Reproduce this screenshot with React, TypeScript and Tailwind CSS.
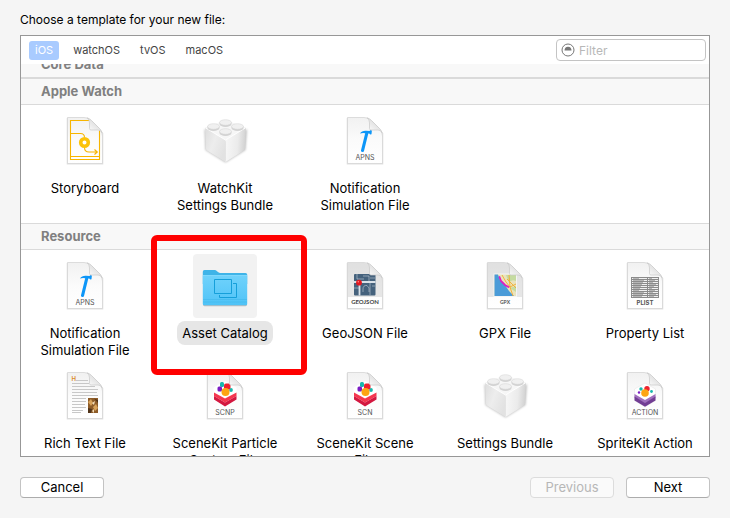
import type { ReactNode } from "react";

function Page({ children }: { children?: ReactNode }) {
  return (
    <svg viewBox="0 0 64 64" className="size-16" aria-hidden="true">
      <defs>
        <linearGradient id="paper" x1="0" y1="0" x2="0" y2="1">
          <stop offset="0" stopColor="#f1f1f1" />
          <stop offset="0.5" stopColor="#fbfbfb" />
          <stop offset="1" stopColor="#ffffff" />
        </linearGradient>
        <linearGradient id="curl" x1="0.1" y1="1" x2="0.7" y2="0.3">
          <stop offset="0" stopColor="#ffffff" />
          <stop offset="1" stopColor="#dcdcdc" />
        </linearGradient>
      </defs>
      <path d="M14.5 9v45.8h35V24" fill="none" stroke="#000" strokeOpacity="0.12" strokeWidth="1.6" />
      <path
        d="M14.5 8.5H31q4 0 7 3l8.500 8.500q3 3 3 7V54.500H14.500Z"
        fill="url(#paper)"
        stroke="#d4d4d4"
        strokeWidth="0.8"
      />
      {children}
      <path d="M34 8.800q2.500 1.500 2.500 5V19.500q0 1.500 1.500 1.500H45q3 0 4.200 3Q48.500 21.500 46.500 19.500L38.500 11.500Q36.500 9.500 34 8.800Z" fill="url(#curl)" stroke="#c8c8c8" strokeWidth="0.7" />
    </svg>
  );
}

function PageLabel({ children, size = 7, weight = 400, fill = "#555" }: { children: string; size?: number; weight?: number; fill?: string }) {
  return (
    <text x="32" y="51" textAnchor="middle" fontFamily="Inter, sans-serif" fontSize={size} fontWeight={weight} fill={fill}>
      {children}
    </text>
  );
}

function StoryboardIcon() {
  return (
    <Page>
      <g fill="none" stroke="#f7b500" strokeWidth="1.100">
        <path d="M36.500 11.500H17.500V50.500H46.500V21.500M17.500 47.500H46.500" />
        <path d="M17.500 24.500H27.500q4 0 4 4M31.500 38.500q0 4.500 4.500 4.500H44.500M41.500 40.500l2.800 2.500l-2.800 2.500" />
      </g>
      <circle cx="31.500" cy="33.500" r="3.800" fill="#fff" stroke="#fcc309" strokeWidth="3.600" />
    </Page>
  );
}

function ApnsIcon() {
  return (
    <Page>
      <path
        d="M27 24.500q1.800-3 6-2.800l3.500.3 1-.9 1.400.3-.4 3.900-1.300.2-.9-1.100-1 .1L31 42q-.4 1.200-1.500.9l-.8-.2q-1-.4-.7-1.500L32.200 24.200Q29.300 23.700 27 24.500Z"
        fill="#0d96f8"
      />
      <PageLabel>APNS</PageLabel>
    </Page>
  );
}

function Stud({ x, y }: { x: number; y: number }) {
  return (
    <g>
      <path d={`M${x - 6} ${y}v1.500a6 3 0 0 0 12 0V${y}Z`} fill="#d3d3d3" />
      <ellipse cx={x} cy={y} rx="6" ry="2.800" fill="#f0f0f0" stroke="#d0d0d0" strokeWidth="0.500" />
    </g>
  );
}

function BrickIcon() {
  return (
    <svg viewBox="0 0 64 64" className="size-16" aria-hidden="true">
      <defs>
        <linearGradient id="brickLeft" x1="0" y1="0" x2="1" y2="0.6">
          <stop offset="0" stopColor="#dddddd" />
          <stop offset="0.5" stopColor="#ededed" />
          <stop offset="1" stopColor="#e2e2e2" />
        </linearGradient>
        <linearGradient id="brickRight" x1="0" y1="0.3" x2="1" y2="0.4">
          <stop offset="0" stopColor="#f7f7f7" />
          <stop offset="0.6" stopColor="#ebebeb" />
          <stop offset="1" stopColor="#d0d0d0" />
        </linearGradient>
        <filter id="brickShade" x="-20%" y="-20%" width="140%" height="140%">
          <feGaussianBlur stdDeviation="1.200" />
        </filter>
      </defs>
      <path d="M11.500 20L32.500 32L54 20L52.500 41L32.500 53.500L12.500 41Z" fill="#000" fillOpacity="0.250" filter="url(#brickShade)" />
      <path d="M12 18.500L32.500 11L53 18.500L32.500 31Z" fill="#f6f6f6" />
      <path d="M12 18.500L32.500 31V53L14 41.500q-1-.6-1-1.800Z" fill="url(#brickLeft)" />
      <path d="M53 18.500L32.500 31V53L51 41.500q1-.6 1-1.800Z" fill="url(#brickRight)" />
      <path d="M12.200 18.700L32.500 31L52.800 18.700" fill="none" stroke="#fff" strokeWidth="0.900" />
      <Stud x={32.5} y={13.5} />
      <Stud x={20.5} y={17.5} />
      <Stud x={44.5} y={17.5} />
      <Stud x={32.5} y={22.5} />
    </svg>
  );
}

function FolderIcon() {
  return (
    <svg viewBox="0 0 64 64" className="size-16" aria-hidden="true">
      <defs>
        <linearGradient id="folder" x1="0" y1="0" x2="0" y2="1">
          <stop offset="0" stopColor="#70d2fb" />
          <stop offset="1" stopColor="#4fc3f7" />
        </linearGradient>
      </defs>
      <path d="M10 20H54V50.500q0 1.800-1.500 1.800H11.500Q10 52.300 10 50.500Z" fill="#000" fillOpacity="0.220" />
      <path d="M9.800 17.800Q9.800 16 11.500 16H21.500q1.500 0 2.500 1.200l1 .8q1 1 2.500 1H52.500q1.700 0 1.700 1.500V30H9.800Z" fill="#3fb4e8" />
      <path d="M9.800 21.500H54.200V50q0 1.300-1.300 1.300H11.100Q9.800 51.300 9.800 50Z" fill="url(#folder)" />
      <path d="M10 21.500H54" stroke="#8addff" strokeWidth="0.800" />
      <path d="M10 45.500H54M10 48H54" stroke="#35aee4" strokeWidth="0.600" strokeOpacity="0.600" />
      <g fill="none" stroke="#159fda" strokeWidth="1">
        <path d="M21.500 25.500H38.500V39.500H21.500ZM40 29.500H43.500V43.500H26.500V41" />
      </g>
    </svg>
  );
}

function GeoJsonIcon() {
  return (
    <Page>
      <path d="M14.900 9H31q4 0 7 3l8.500 8.500q2.500 3 2.500 6V43H14.900Z" fill="#cfcfcf" fillOpacity="0.500" />
      <rect x="21" y="20" width="21.500" height="21.500" rx="1" fill="#45627d" />
      <g fill="none" stroke="#d9e1e8">
        <path d="M21 28H42.500M26.500 28V41.500" strokeWidth="1.800" />
        <path d="M24 20V25H31M30 22H36V27M37 24H42M37 28V41M21 34H26M30 38V35Q30 31 34 31.500L36 34V38M39 32H42" strokeWidth="0.700" strokeOpacity="0.700" />
      </g>
      <circle cx="26" cy="28.700" r="2.900" fill="#e3171e" />
      <circle cx="25.300" cy="27.800" r="0.800" fill="#ff8a8a" />
      <text x="32" y="50" textAnchor="middle" fontFamily="Lato, sans-serif" fontSize="6" fontWeight="700" fill="#444">
        GEOJSON
      </text>
    </Page>
  );
}

function GpxIcon() {
  return (
    <Page>
      <path d="M14.900 9H31q4 0 7 3l8.500 8.500q2.500 3 2.500 6V43H14.900Z" fill="#cfcfcf" fillOpacity="0.500" />
      <rect x="20.500" y="19.500" width="23.500" height="23.500" fill="#f4f4f4" />
      <rect x="21.500" y="20.500" width="21.500" height="21.500" fill="#e9e3bd" />
      <path d="M21.500 20.500H25L27 26L32 31L36 37L41 42H21.500Z" fill="#4a9bd8" />
      <path d="M33 21H43V27Q38 25 36 29ZM37 34L43 32V38Z" fill="#c5dba0" />
      <path d="M29 21L33 28L37 33L40 42M34 25L43 34M36 21L37 33L43 30" fill="none" stroke="#f3ad2e" strokeWidth="0.900" />
      <path d="M26.500 23L28 27L32 31L35.500 33" fill="none" stroke="#dc1fc0" strokeWidth="1.800" strokeLinecap="round" />
      <text x="32" y="50" textAnchor="middle" fontFamily="Lato, sans-serif" fontSize="5" fontWeight="700" fill="#555">
        GPX
      </text>
    </Page>
  );
}

function PlistIcon() {
  return (
    <Page>
      <rect x="18" y="23" width="28" height="21" fill="#8b8b8b" />
      {[24, 26, 28, 30, 32, 34, 36, 38, 40, 42].map((y, i) => (
        <g key={y} fill="#efefef">
          <rect x="19" y={y} width="15" height="1" />
          <rect x="35" y={y} width="10" height="1" />
          <rect x="20" y={y} width={6 + ((i * 5) % 6)} height="1" fill="#b5b5b5" />
          <rect x="36" y={y} width={3 + ((i * 3) % 5)} height="1" fill="#b5b5b5" />
        </g>
      ))}
      <PageLabel size={6} weight={700}>PLIST</PageLabel>
    </Page>
  );
}

function RichTextIcon() {
  return (
    <Page>
      <text x="18.500" y="17" fontFamily="Inter, sans-serif" fontSize="6" fontWeight="600" fill="#d98a28">
        H
      </text>
      <g stroke="#c2c2c2" strokeWidth="0.900">
        <path d="M23 16.500H35M19 19.500H36M19 22.500H42M19 25.500H45M19 28.500H44M19 31.500H45M19 34.500H33M19 37.500H33M19 40.500H32M19 43.500H33M19 46.500H30M19 48.500H28" />
      </g>
      <rect x="35" y="34" width="10" height="15" fill="#8e5c28" />
      <path d="M35 38L38 35L40 39L38 42ZM40 43L43 40L45 44L42 47Z" fill="#d8a25a" />
      <path d="M41 34.500L45 36V39ZM35 44L39 45L38 49H35Z" fill="#503318" />
      <path d="M39 39L42 37L41 41ZM39 47L41 45V49Z" fill="#f2ddb9" />
    </Page>
  );
}

function SceneIcon({ label }: { label: string }) {
  return (
    <Page>
      <path d="M32 17L43.500 23.500V36L32 42.500L20.500 36V23.500Z" fill="#fff" />
      <path d="M21 28.500L32 34.500L43.500 28.500V32L32 38.500L21 32Z" fill="#f5364f" />
      <path d="M21 32L32 38.500L43.500 32V35.500L32 42.500L21 35.500Z" fill="#d3173f" />
      <rect x="27" y="18" width="4" height="5" rx="1.500" fill="#18b8ad" />
      <rect x="24.500" y="22.500" width="4.500" height="5" rx="1.500" fill="#7b1cc4" />
      <circle cx="38" cy="26" r="1.900" fill="#18b8ad" />
      <rect x="31" y="19.500" width="6.500" height="6" rx="2" fill="#ee2330" />
      <circle cx="32.500" cy="28" r="4" fill="#fda513" />
      <PageLabel>{label}</PageLabel>
    </Page>
  );
}

function SpriteIcon() {
  return (
    <Page>
      <path d="M32 19L42.500 25V36.500L32 43L21.500 36.500V25Z" fill="#fff" stroke="#e3e3e3" strokeWidth="0.500" />
      <path d="M21.500 30L32 36L42.500 30V33.500L32 39.500L21.500 33.500Z" fill="#a070be" />
      <path d="M21.500 32.500L32 39L42.500 32.500V36.500L32 42.800L21.500 36.500Z" fill="#713d93" />
      <circle cx="28" cy="25" r="1.700" fill="#18b8ad" />
      <circle cx="26" cy="28.500" r="1.200" fill="#7b1cc4" />
      <circle cx="38.500" cy="27.500" r="1.400" fill="#18b8ad" />
      <circle cx="34" cy="24.800" r="2.700" fill="#ee2330" />
      <circle cx="32" cy="29" r="3.800" fill="#fda513" />
      <PageLabel>ACTION</PageLabel>
    </Page>
  );
}

function SectionHeader({ children }: { children: string }) {
  return (
    <h2 className="border-y border-[#dadada] bg-[#f8f8f8] px-5 text-[13px] leading-[25px] font-bold text-[#808080]">
      {children}
    </h2>
  );
}

type Template = { name: string; icon: ReactNode; selected?: boolean };

function TemplateGrid({ items }: { items: Template[] }) {
  return (
    <ul className="-mx-1.5 grid grid-cols-5 gap-y-0.5 pt-1 pb-1.5">
      {items.map(({ name, icon, selected }) => (
        <li key={name} className="relative">
          <button type="button" aria-pressed={!!selected} className="flex w-full flex-col items-center gap-[3px]">
            <span className={selected ? "rounded-[4px] bg-[#f2f2f2]" : ""}>{icon}</span>
            <span
              className={
                selected
                  ? "rounded-lg bg-[#e6e6e6] px-[5px] pt-1 pb-[3px] leading-[17px]"
                  : "max-w-[107px] pt-1 pb-[3px] leading-[17px]"
              }
            >
              {name}
            </span>
          </button>
          {selected && (
            <span className="pointer-events-none absolute -top-[19px] -right-3 -bottom-[13px] -left-1 z-10 rounded-md border-6 border-[#ff0000]" />
          )}
        </li>
      ))}
    </ul>
  );
}

const watch: Template[] = [
  { name: "Storyboard", icon: <StoryboardIcon /> },
  { name: "WatchKit Settings\u00a0Bundle", icon: <BrickIcon /> },
  { name: "Notification Simulation File", icon: <ApnsIcon /> },
];

const resource: Template[] = [
  { name: "Notification Simulation File", icon: <ApnsIcon /> },
  { name: "Asset Catalog", icon: <FolderIcon />, selected: true },
  { name: "GeoJSON File", icon: <GeoJsonIcon /> },
  { name: "GPX File", icon: <GpxIcon /> },
  { name: "Property List", icon: <PlistIcon /> },
  { name: "Rich Text File", icon: <RichTextIcon /> },
  { name: "SceneKit Particle System File", icon: <SceneIcon label="SCNP" /> },
  { name: "SceneKit Scene File", icon: <SceneIcon label="SCN" /> },
  { name: "Settings Bundle", icon: <BrickIcon /> },
  { name: "SpriteKit Action", icon: <SpriteIcon /> },
];

const platforms = ["iOS", "watchOS", "tvOS", "macOS"];

export default function App() {
  return (
    <main className="flex h-screen flex-col bg-[#f5f5f5] px-5 pt-[11px] pb-5 font-[Inter,sans-serif] text-[13px] leading-[17px] text-black">
      <h1 className="text-[12px]">Choose a template for your new file:</h1>
      <section className="mt-[7px] flex min-h-0 flex-1 flex-col border border-[#979797] bg-white">
        <div className="flex h-7 shrink-0 items-center justify-between pr-[3px] pl-2">
          <nav className="flex gap-2 text-[11px] leading-[19px] text-[#444]">
            {platforms.map((name, i) => (
              <button
                key={name}
                type="button"
                className={i === 0 ? "rounded-[3px] bg-[#a9cbff] px-[6px] text-white" : "px-[6px]"}
              >
                {name}
              </button>
            ))}
          </nav>
          <label className="flex h-[22px] w-[150px] items-center gap-1 rounded-[4px] border border-[#c4c4c4] bg-white px-1">
            <svg viewBox="0 0 14 14" className="size-3.5 shrink-0" aria-hidden="true">
              <circle cx="7" cy="7" r="6" fill="none" stroke="#777" strokeWidth="1" />
              <path d="M3.500 7.500a3.500 3.800 0 0 1 7 0Z" fill="#777" />
            </svg>
            <input
              type="text"
              aria-label="Filter"
              placeholder="Filter"
              className="min-w-0 flex-1 bg-transparent text-[12px] leading-[17px] outline-none placeholder:text-[#b8b8b8]"
            />
          </label>
        </div>
        <div className="min-h-0 flex-1 overflow-hidden">
          <div className="-mt-[13px]">
            <SectionHeader>Core Data</SectionHeader>
            <SectionHeader>Apple Watch</SectionHeader>
            <TemplateGrid items={watch} />
            <SectionHeader>Resource</SectionHeader>
            <TemplateGrid items={resource} />
          </div>
        </div>
      </section>
      <footer className="mt-5 flex shrink-0 gap-3">
        <button type="button" className="mr-auto h-[21px] w-[84px] rounded-[4px] border border-[#c3c3c3] border-b-[#acacac] bg-white">
          Cancel
        </button>
        <button type="button" disabled className="h-[21px] w-[84px] rounded-[4px] border border-[#dcdcdc] bg-[#fafafa] text-[#b7b7b7]">
          Previous
        </button>
        <button type="button" className="h-[21px] w-[84px] rounded-[4px] border border-[#c3c3c3] border-b-[#acacac] bg-white">
          Next
        </button>
      </footer>
    </main>
  );
}
